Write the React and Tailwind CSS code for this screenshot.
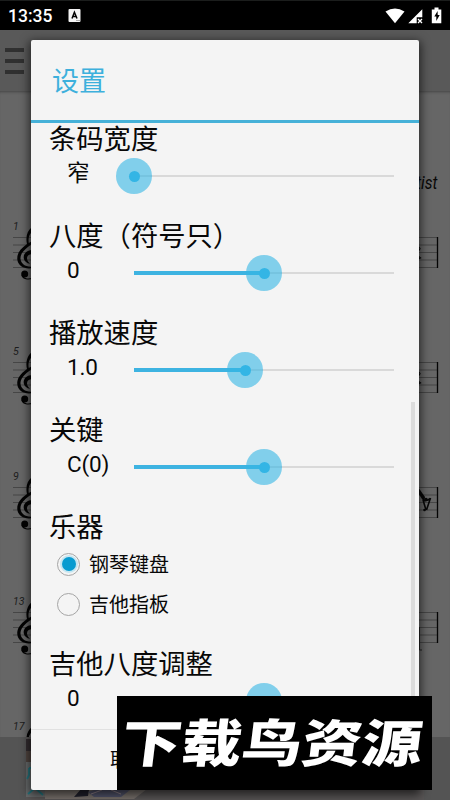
import React, { useState } from "react";

const sliders = [
  { label: "条码宽度", value: "窄", percent: 0 },
  { label: "八度（符号只）", value: "0", percent: 50 },
  { label: "播放速度", value: "1.0", percent: 42.7 },
  { label: "关键", value: "C(0)", percent: 50 },
];

const measures = [1, 5, 9, 13, 17];

function StatusBar() {
  return (
    <div className="h-[30px] bg-black border-t border-[#1b1d1c] flex items-center text-white pl-2 pr-2">
      <span className="text-[17.5px] leading-none font-medium pt-[2px]">13:35</span>
      <svg className="ml-[16px]" width="13" height="13" viewBox="0 0 13 13">
        <rect x="0.5" width="12" height="13" rx="1" fill="#f4f4f4" />
        <path d="M4 9.5 6.4 3.3 9 9.5M5 7.5h3" stroke="#000" strokeWidth="1.5" fill="none" />
        <path d="M8 11.5h4" stroke="#999" strokeWidth="0.8" />
      </svg>
      <svg className="ml-auto" width="57" height="18" viewBox="0 0 57 18">
        <path d="M0.5 4.5Q10 -1.7 19.5 4.5L10 16.3Z" fill="#fff" />
        <path d="M23.3 16.3 37.3 2.3V10.2H31.7V16.3Z" fill="#fff" />
        <path d="m33 12 4 4m0-4-4 4" stroke="#fff" strokeWidth="1.3" />
        <path d="M49.5 0.5h4v2h2.8v13.8h-9.5V2.5h2.7Z" fill="#fff" />
        <path d="M52.6 4 49.3 9.5h2V14l3.4-6h-2Z" fill="#000" />
      </svg>
    </div>
  );
}

function Stave({ number }) {
  return (
    <div className="h-[125px] relative">
      <span className="absolute left-[13px] top-0 text-[10.5px] leading-[12px] italic text-[#1c1c1c] font-['Roboto']">
        {number}
      </span>
      <svg className="absolute left-0 top-0" width="450" height="75" viewBox="0 -16 450 75">
        <path d="M13 .5H438M13 8H438M13 15.5H438M13 23H438M13 30.5H438" stroke="#3d3d3d" strokeWidth="0.8" />
        <path d="M437.5 0V31" stroke="#050505" strokeWidth="1.3" />
        <path
          d="M32-10C27-6 25.5 0 27 7C20 12 16.5 17 17.4 23C18.5 29.5 25 32.5 33 31V29.5C26 30.5 21 27 20.5 22C20 17 24 13 28.5 9.5L33 6V3.5L28.8 6C28 1 29 -3 33-6Z"
          fill="#030303"
        />
        <path d="M33 13C27 13 23.5 16.5 23.7 20.5C23.9 24 27 26.5 30 26.7C27.5 24.5 26.5 22 27.3 19.8C28 18 30 17 33 17Z" fill="#030303" />
        <circle cx="24.7" cy="37" r="3.5" fill="#030303" />
        <path d="M22 38C23 42 28 43 33 41" stroke="#030303" strokeWidth="1.1" fill="none" />
        {number <= 5 && <path d="M418.5 9.5l1.5 2-1 2M418 19l2.5 2-2 1" stroke="#090909" strokeWidth="1.2" fill="none" />}
        {number === 9 && (
          <>
            <path d="M418 0 425 10 424 15 418 6Z" fill="#080808" />
            <path d="M423 13 426 23M430.5 11 426.5 23M424 13.5Q428 14 430 11.5" stroke="#080808" strokeWidth="1.6" fill="none" />
            <circle cx="426" cy="12.5" r="1.8" fill="#080808" />
            <circle cx="424.5" cy="23" r="1.3" fill="#080808" />
          </>
        )}
        {number === 13 && <path d="M419.5 15V38H422" stroke="#222" fill="none" />}
      </svg>
    </div>
  );
}

function Score() {
  return (
    <div className="h-[646px] overflow-hidden bg-[#666] shadow-[inset_0_3px_3px_-2px_#444]">
      <p className="pt-[81px] pr-[13px] h-[130px] text-right italic text-[18px] leading-[22px] text-[#080808]">
        <span className="inline-block origin-right scale-x-[0.86]">Artist</span>
      </p>
      {measures.map((n) => (
        <Stave key={n} number={n} />
      ))}
    </div>
  );
}

function AdBanner() {
  return (
    <div className="h-[63px] bg-[#545454] pl-[26px]">
      <svg width="398" height="63" viewBox="0 0 398 63">
        <path d="M0 0H398V63H0Z" fill="#585555" />
        <path d="M0 2H10V22H0Z" fill="#332d30" />
        <path d="M0 14H10V25H0Z" fill="#514540" />
        <path d="M0 25H19V60H0Z" fill="#686b6c" />
        <path d="M3 31V38L1 42M3 31H8M2 57 9 51 17 58" stroke="#237780" strokeWidth="1.8" fill="none" />
        <path d="M19 52H121L108 62H19Z" fill="#77706b" />
        <path d="M48 60 56 51 63 53 62 59Z" fill="#20202b" />
        <path d="M62 55 74 51 104 53 95 60H68Z" fill="#51536a" />
        <path d="m65 57 11-4m9 0 10 4" stroke="#93848d" />
      </svg>
    </div>
  );
}

function SliderRow({ label, value, percent }) {
  return (
    <div className="h-[97px]">
      <h2 className="text-[27.3px] leading-[36px] whitespace-nowrap">{label}</h2>
      <div className="h-[36px] flex items-center pl-[18px]">
        <span className="w-[67px] shrink-0 text-[22.5px] leading-[30px] pb-[7px] tracking-[-0.2px]">{value}</span>
        <div className="relative w-[260px] h-[36px] flex items-center">
          <div className="w-full h-[2px] bg-[#d9d9d9]" />
          <div className="absolute left-0 h-[4px] bg-[#3db3e1]" style={{ width: `${percent}%` }} />
          <div
            className="absolute size-[36px] -ml-[18px] rounded-full bg-[#33b5e5]/60 flex items-center justify-center"
            style={{ left: `${percent}%` }}
          >
            <div className="size-[11px] rounded-full bg-[#33b5e5]" />
          </div>
        </div>
      </div>
    </div>
  );
}

function RadioRow({ label, checked, onSelect }) {
  return (
    <button onClick={onSelect} className="h-[40px] pl-[8px] flex items-center gap-[9px] text-[20px]">
      <span className="size-[23px] rounded-full border-[1.5px] border-[#a5a5a5] flex items-center justify-center">
        {checked && <span className="size-[14px] rounded-full bg-[#079bd0] shadow-[0_0_0_2px_#c6e6f1]" />}
      </span>
      <span className="leading-[28px] pt-[2px]">{label}</span>
    </button>
  );
}

function SettingsDialog() {
  const [instrument, setInstrument] = useState("piano");

  return (
    <div className="absolute left-[31px] top-[40px] w-[388px] h-[750px] rounded-[2px] bg-[#f4f4f4] shadow-[0_3px_10px_2px_rgba(0,0,0,0.6)] flex flex-col overflow-hidden text-[#080808]">
      <div className="h-[83px] shrink-0 border-b-[3px] border-[#46b1d8] pl-[21px] pt-[3px] flex items-center">
        <h1 className="text-[27px] leading-[40px] text-[#3db0dc]">设置</h1>
      </div>
      <div className="relative h-[606px] overflow-hidden pl-[18px]">
        <div className="-mt-[1px]">
          {sliders.map((s) => (
            <SliderRow key={s.label} {...s} />
          ))}
          <div className="h-[137px]">
            <h2 className="text-[27.3px] leading-[36px] -mb-[2px]">乐器</h2>
            <RadioRow label="钢琴键盘" checked={instrument === "piano"} onSelect={() => setInstrument("piano")} />
            <RadioRow label="吉他指板" checked={instrument === "guitar"} onSelect={() => setInstrument("guitar")} />
          </div>
          <SliderRow label="吉他八度调整" value="0" percent={50} />
        </div>
        <div className="absolute right-[4px] top-[279px] bottom-0 w-[4px] bg-[#dcdcdc]" />
      </div>
      <div className="flex-1 border-t border-[#e1e1e1] flex items-center pl-[79px] pt-[2px] text-[19px]">
        取消
      </div>
    </div>
  );
}

function Watermark() {
  return (
    <div className="absolute left-[117px] top-[696px] w-[315px] h-[94px] bg-black flex items-center justify-center pb-[7px] pr-[3px]">
      <span className="text-white text-[51px] leading-[76px] font-black whitespace-nowrap scale-x-[1.18] -skew-x-6 font-['Noto_Sans_CJK_SC',sans-serif]">
        下载鸟资源
      </span>
    </div>
  );
}

function App() {
  return (
    <div className="relative w-[450px] h-[800px] overflow-hidden bg-[#666] font-['Roboto','Noto_Sans_CJK_SC',sans-serif]">
      <StatusBar />
      <div className="h-[61px] bg-[#595959] pl-[5px] pt-[18px] flex flex-col gap-[7px]">
        <div className="w-[19px] h-[4px] bg-[#303030]" />
        <div className="w-[19px] h-[4px] bg-[#303030]" />
        <div className="w-[19px] h-[4px] bg-[#303030]" />
      </div>
      <Score />
      <AdBanner />
      <SettingsDialog />
      <Watermark />
    </div>
  );
}

export default App;
